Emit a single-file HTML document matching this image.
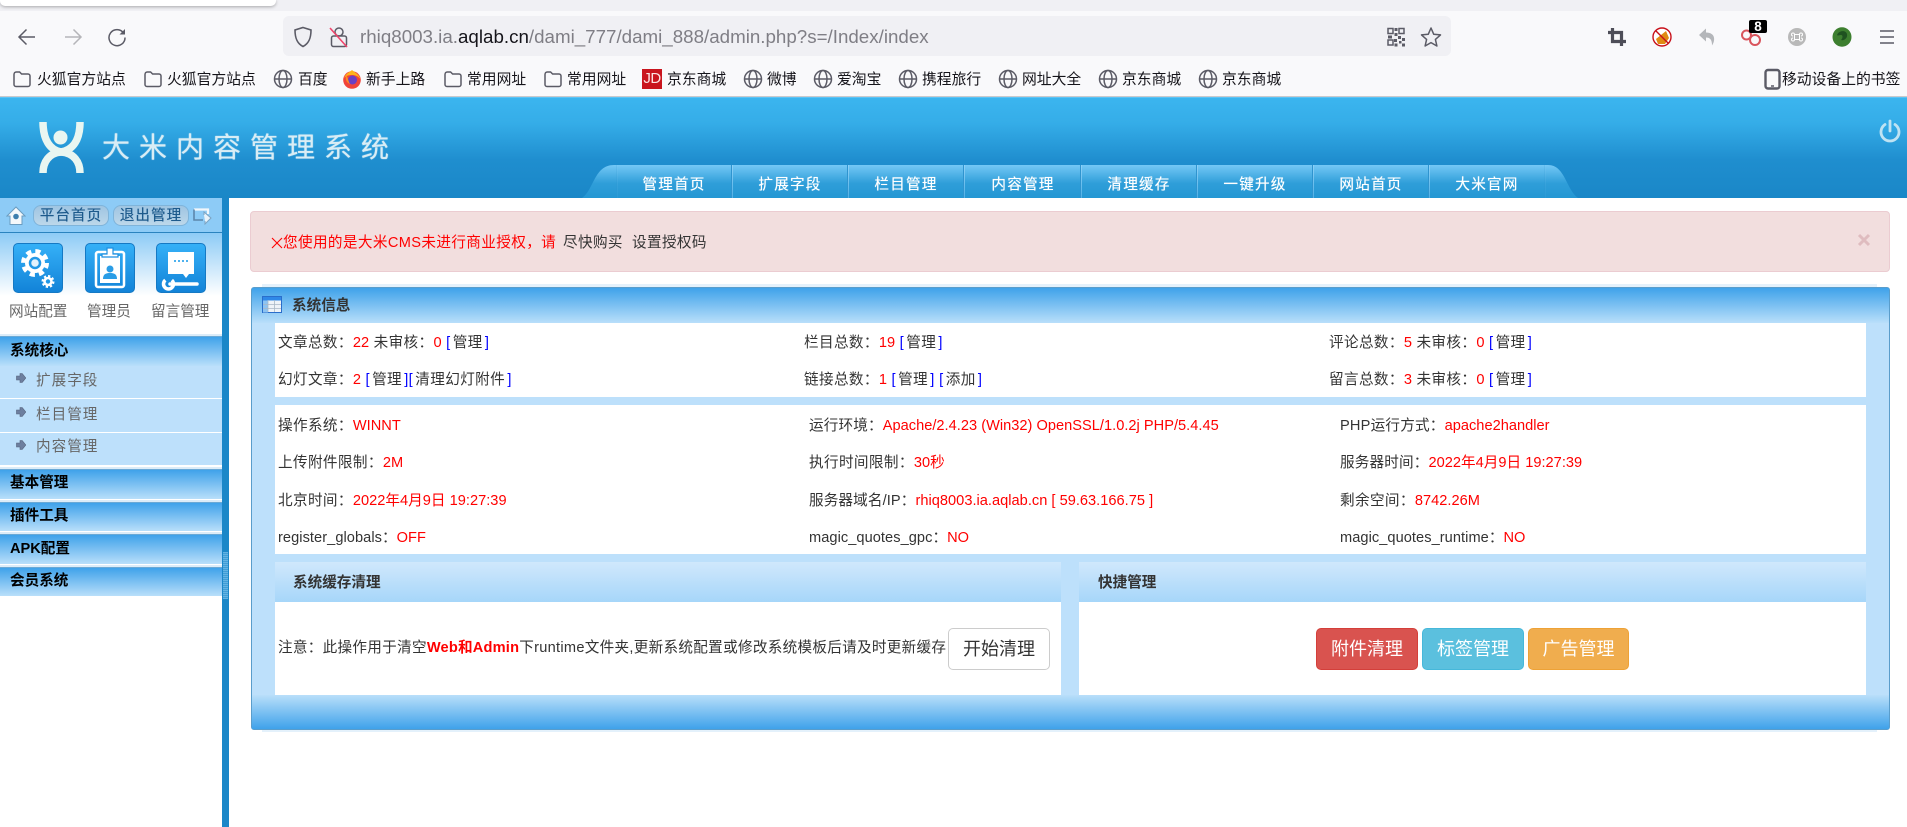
<!DOCTYPE html>
<html lang="zh-CN">
<head>
<meta charset="utf-8">
<title>大米内容管理系统</title>
<style>
html,body{margin:0;padding:0;background:#fff;}
body{width:1907px;height:827px;position:relative;overflow:hidden;font-family:"Liberation Sans","Noto Sans CJK SC",sans-serif;font-size:14.6px;color:#333;}
div,svg,span.a{box-sizing:border-box;}
.b{position:absolute;}
.t{position:absolute;height:20px;line-height:20px;white-space:nowrap;letter-spacing:.38px;}
.bm{font-size:14.8px;color:#15141a;letter-spacing:0;}
.r{color:#f00;letter-spacing:.02px;}
.l{color:#00f;}
.l i{font-style:normal;color:#333;padding:0 2.200px;letter-spacing:.38px;}
.la{letter-spacing:.06px;}
.sh{position:absolute;left:0;width:222px;background:linear-gradient(#3fa2ea,#b9dffa);border-top:1px solid #6aa9d6;box-shadow:0 -2px 0 #dcecf8;}
.st{position:absolute;left:10px;height:20px;line-height:20px;font-weight:bold;color:#000;white-space:nowrap;}
.si{position:absolute;left:36px;height:20px;line-height:20px;color:#666;letter-spacing:1px;white-space:nowrap;}
.tab{position:absolute;top:165px;height:33px;line-height:41px;width:116px;text-align:center;color:#fff;letter-spacing:1.200px;font-size:14.6px;text-shadow:0 0 .6px #fff;overflow:hidden;}
.sep{position:absolute;top:165px;width:2px;height:33px;background:linear-gradient(#8ed2f8,#51b0e5);border-left:1px solid #2f94cf;}
.btn{position:absolute;top:628px;height:42px;line-height:41px;text-align:center;font-size:18px;color:#fff;border-radius:5px;}
.pill{position:absolute;top:205px;height:21px;line-height:21px;text-align:center;color:#1d5a8c;letter-spacing:1px;border-radius:8px;background:linear-gradient(#9fc5e2,#bcd7ea);border:1px solid #7fb4da;font-size:14.6px;text-shadow:0 0 .4px #1d5a8c;overflow:hidden;}
.ico{position:absolute;top:243px;width:50px;height:50px;border-radius:5px;background:linear-gradient(#35b0f7,#1283d8);border:1px solid #1579c4;}
.lab{position:absolute;top:302px;height:20px;line-height:20px;color:#666;font-size:14.6px;white-space:nowrap;}
</style>
</head>
<body>
<svg width="0" height="0" style="position:absolute">
<defs>
<symbol id="folder" viewBox="0 0 20 20"><path d="M2 5.500C2 4 3 3 4.300 3H7.600L9.600 5H16C17.300 5 18 6 18 7V15.500C18 16.600 17.200 17.500 16 17.500H4C2.800 17.500 2 16.600 2 15.500Z" fill="none" stroke="#5b5b66" stroke-width="1.500"/></symbol>
<symbol id="globe" viewBox="0 0 20 20"><g fill="none" stroke="#5b5b66" stroke-width="1.500"><circle cx="10" cy="10" r="8.500"/><ellipse cx="10" cy="10" rx="4" ry="8.500"/><path d="M1.500 10H18.500"/></g></symbol>
<symbol id="arr" viewBox="0 0 10 10"><path d="M4 0.500H6.200L9.800 5 6.200 9.500H4V7H0.500V3H4Z" fill="#6d7f9f" stroke="#55617a" stroke-width=".6"/></symbol>
<linearGradient id="tabg" x1="0" y1="0" x2="0" y2="1"><stop offset="0" stop-color="#74c8f6"/><stop offset=".55" stop-color="#2f9ed9"/><stop offset="1" stop-color="#2497d3"/></linearGradient>
</defs>
</svg>

<!-- browser chrome -->
<div class="b" style="left:0;top:0;width:1907px;height:11px;background:#f0f0f4;"></div>
<div class="b" style="left:0;top:0;width:276px;height:6px;background:#fff;border-radius:0 0 5px 5px;box-shadow:0 1px 3px rgba(0,0,0,.3);"></div>
<div class="b" style="left:0;top:11px;width:1907px;height:86px;background:#f9f9fb;border-bottom:1px solid #c9c9cc;"></div>
<div class="b" style="left:283px;top:16px;width:1168px;height:40px;background:#f0f0f4;border-radius:6px;"></div>

<svg class="b" style="left:17px;top:27px" width="20" height="20" viewBox="0 0 20 20"><path d="M18 10H2.500M9.500 2.500L2 10l7.500 7.500" fill="none" stroke="#5b5b66" stroke-width="1.500"/></svg>
<svg class="b" style="left:63px;top:27px" width="20" height="20" viewBox="0 0 20 20"><path d="M2 10H17.500M10.500 2.500L18 10l-7.500 7.500" fill="none" stroke="#b5b5b9" stroke-width="1.500"/></svg>
<svg class="b" style="left:107px;top:27px" width="20" height="20" viewBox="0 0 20 20"><path d="M16.500 6A8 8 0 1 0 18 10.500" fill="none" stroke="#5b5b66" stroke-width="1.500"/><path d="M18 2V7.500H12.500Z" fill="#5b5b66"/></svg>
<svg class="b" style="left:293px;top:26px" width="20" height="22" viewBox="0 0 20 22"><path d="M10 1.500L18 4C18 12 16 17.500 10 20.500 4 17.500 2 12 2 4Z" fill="none" stroke="#5b5b66" stroke-width="1.600"/></svg>
<svg class="b" style="left:329px;top:26px" width="20" height="22" viewBox="0 0 20 22"><circle cx="10" cy="6" r="4" fill="none" stroke="#5b5b66" stroke-width="1.500"/><rect x="2.500" y="10" width="15" height="10.500" rx="2" fill="#f0f0f4" stroke="#5b5b66" stroke-width="1.500"/><path d="M1 2L18 21" stroke="#f0446b" stroke-width="1.600"/></svg>
<div class="t" style="left:360px;top:27px;font-size:18.750px;color:#7f7e85;letter-spacing:0;">rhiq8003.ia.<span style="color:#15141a">aqlab.cn</span>/dami_777/dami_888/admin.php?s=/Index/index</div>

<svg class="b" style="left:1387px;top:27px" width="18" height="20" viewBox="0 0 18 20"><g fill="none" stroke="#5b5b66" stroke-width="1.500"><rect x="1" y="1.500" width="5" height="5"/><rect x="12" y="1.500" width="5" height="5"/><rect x="1" y="13" width="5" height="5"/></g><g fill="#5b5b66"><rect x="7.500" y="1" width="3" height="3"/><rect x="7.500" y="6" width="3" height="3"/><rect x="1" y="8.500" width="4" height="3"/><rect x="11" y="9" width="3" height="3"/><rect x="7" y="12" width="3" height="3"/><rect x="12" y="14" width="2.500" height="2.500"/><rect x="15" y="11" width="3" height="3"/><rect x="7.500" y="16.500" width="3" height="3"/><rect x="15" y="16.500" width="3" height="3"/></g></svg>
<svg class="b" style="left:1420px;top:26px" width="22" height="22" viewBox="0 0 22 22"><path d="M11 2L13.700 8.200 20.500 8.900 15.400 13.400 16.900 20 11 16.600 5.100 20 6.600 13.400 1.500 8.900 8.300 8.200Z" fill="none" stroke="#5b5b66" stroke-width="1.500" stroke-linejoin="round"/></svg>

<svg class="b" style="left:1607px;top:27px" width="20" height="20" viewBox="0 0 20 20"><path d="M5.500 1V14.500H19M1 5.500H14.500V19" fill="none" stroke="#4e4e58" stroke-width="3.200"/></svg>
<svg class="b" style="left:1652px;top:26px" width="20" height="22" viewBox="0 0 20 22"><circle cx="10" cy="11" r="9" fill="#fff" stroke="#c8101a" stroke-width="1.400"/><path d="M4 13L14 5l3 7-4 6H6Z" fill="#e08a14"/><path d="M3.500 4.500L16.500 17.500" stroke="#c8101a" stroke-width="1.400"/></svg>
<svg class="b" style="left:1698px;top:27px" width="18" height="20" viewBox="0 0 18 20"><path d="M8 1.500L1 8l7 6.500V10.500C12 10.500 14 12.500 14 18.500 17.500 13.500 17.500 5.500 8 5.500Z" fill="#b4b6ba"/></svg>
<svg class="b" style="left:1741px;top:19px" width="28" height="30" viewBox="0 0 28 30"><circle cx="5.500" cy="16" r="4.500" fill="none" stroke="#d9545c" stroke-width="2"/><circle cx="14" cy="21" r="5" fill="none" stroke="#d9545c" stroke-width="2"/><rect x="8" y="1" width="18" height="13" rx="2" fill="#000"/></svg>
<div class="t" style="left:1749px;top:19.500px;width:18px;height:14px;line-height:14px;text-align:center;color:#fff;font-weight:bold;font-size:13.500px;letter-spacing:0;">8</div>
<svg class="b" style="left:1788px;top:28px" width="18" height="18" viewBox="0 0 18 18"><circle cx="9" cy="9" r="9" fill="#b9b9b9"/><path d="M6.500 6.500H11.500V11.500H6.500ZM6.500 6.500A1.500 1.500 0 1 0 5 8M11.500 6.500A1.500 1.500 0 1 1 13 8M6.500 11.500A1.500 1.500 0 1 1 5 10M11.500 11.500A1.500 1.500 0 1 0 13 10" fill="none" stroke="#fff" stroke-width="1"/></svg>
<svg class="b" style="left:1832px;top:27px" width="20" height="20" viewBox="0 0 20 20"><ellipse cx="10" cy="10" rx="9.500" ry="9.800" fill="#3d7f2f"/><path d="M5 8C7 3 14 3 15 7 16 11 12 14 9 13 11 11 11 8 9 8 7 8 6 9 5 8Z" fill="#1f5220"/></svg>
<svg class="b" style="left:1878px;top:29px" width="18" height="16" viewBox="0 0 18 16"><path d="M2 2H16M2 8H16M2 14H16" stroke="#5b5b66" stroke-width="1.500"/></svg>

<!-- bookmarks -->
<svg class="b" style="left:12px;top:69px" width="20" height="20"><use href="#folder"/></svg><div class="t bm" style="left:37px;top:69.500px;">火狐官方站点</div>
<svg class="b" style="left:143px;top:69px" width="20" height="20"><use href="#folder"/></svg><div class="t bm" style="left:167px;top:69.500px;">火狐官方站点</div>
<svg class="b" style="left:273px;top:69px" width="20" height="20"><use href="#globe"/></svg><div class="t bm" style="left:298px;top:69.500px;">百度</div>
<svg class="b" style="left:342px;top:69px" width="20" height="20" viewBox="0 0 20 20"><circle cx="10" cy="11" r="8.800" fill="#f0433a"/><path d="M2 9C4 4 8 3 10 1 12 3 17 5 18.500 10 16 7 13 6 10 6 6 6 4 7 2 9Z" fill="#ffb31a"/><circle cx="10.500" cy="11" r="4.500" fill="#6a3fc4"/><path d="M4 6C6 8 6 12 8 15 5 14 3 11 4 6Z" fill="#ff8a1f"/></svg><div class="t bm" style="left:366px;top:69.500px;">新手上路</div>
<svg class="b" style="left:443px;top:69px" width="20" height="20"><use href="#folder"/></svg><div class="t bm" style="left:467px;top:69.500px;">常用网址</div>
<svg class="b" style="left:543px;top:69px" width="20" height="20"><use href="#folder"/></svg><div class="t bm" style="left:567px;top:69.500px;">常用网址</div>
<div class="b" style="left:642px;top:69px;width:20px;height:20px;background:#c9151e;"></div><div class="t" style="left:642px;top:69px;width:20px;text-align:center;color:#fbe3e4;font-size:15px;letter-spacing:-.5px;">JD</div><div class="t bm" style="left:667px;top:69.500px;">京东商城</div>
<svg class="b" style="left:743px;top:69px" width="20" height="20"><use href="#globe"/></svg><div class="t bm" style="left:767px;top:69.500px;">微博</div>
<svg class="b" style="left:813px;top:69px" width="20" height="20"><use href="#globe"/></svg><div class="t bm" style="left:837px;top:69.500px;">爱淘宝</div>
<svg class="b" style="left:898px;top:69px" width="20" height="20"><use href="#globe"/></svg><div class="t bm" style="left:922px;top:69.500px;">携程旅行</div>
<svg class="b" style="left:998px;top:69px" width="20" height="20"><use href="#globe"/></svg><div class="t bm" style="left:1022px;top:69.500px;">网址大全</div>
<svg class="b" style="left:1098px;top:69px" width="20" height="20"><use href="#globe"/></svg><div class="t bm" style="left:1122px;top:69.500px;">京东商城</div>
<svg class="b" style="left:1198px;top:69px" width="20" height="20"><use href="#globe"/></svg><div class="t bm" style="left:1222px;top:69.500px;">京东商城</div>
<svg class="b" style="left:1764px;top:68px" width="17" height="22" viewBox="0 0 17 22"><rect x="1.500" y="2" width="14" height="18.500" rx="2.500" fill="none" stroke="#5b5b66" stroke-width="2.400"/><path d="M7 18H10" stroke="#5b5b66" stroke-width="1.500"/></svg>
<div class="t bm" style="left:1782px;top:69.500px;">移动设备上的书签</div>

<!-- header -->
<div class="b" style="left:0;top:97px;width:1907px;height:101px;background:linear-gradient(#3bb5ef 0,#35ade8 25%,#1f8ecf 62%,#1a87c7 100%);border-top:1px solid #5bc3f5;"></div>
<svg class="b" style="left:36px;top:120px" width="52" height="56" viewBox="0 0 52 56"><g fill="none" stroke="#e9f6f1" stroke-width="7.500" stroke-linecap="butt"><path d="M7 2C7 20 14 30 25 32 37 30 44 20 44 2"/><path d="M7 53C7 42 13 33 25 32 38 33 44 42 44 53"/></g><circle cx="24.500" cy="17.500" r="7" fill="#e9f6f1"/></svg>
<div class="t" style="left:102px;top:131px;height:34px;line-height:34px;font-size:28px;letter-spacing:9px;color:#d9edf5;text-shadow:0 0 1px #d9edf5;">大米内容管理系统</div>
<svg class="b" style="left:1879px;top:119px" width="22" height="24" viewBox="0 0 22 24"><path d="M6 5.500A9 9 0 1 0 16 5.500" fill="none" stroke="#bfe3f3" stroke-width="2.800" stroke-linecap="round"/><path d="M11 2V12" stroke="#bfe3f3" stroke-width="2.800" stroke-linecap="round"/></svg>

<svg class="b" style="left:582px;top:165px" width="998" height="33" viewBox="0 0 998 33"><path d="M0 33C12 25 12 0 32 0H966C983 0 984 24 996 33Z" fill="url(#tabg)"/></svg>
<div class="sep" style="left:731px"></div><div class="sep" style="left:847px"></div><div class="sep" style="left:963px"></div><div class="sep" style="left:1080px"></div><div class="sep" style="left:1196px"></div><div class="sep" style="left:1312px"></div><div class="sep" style="left:1428px"></div><div class="sep" style="left:616px;opacity:.15"></div><div class="sep" style="left:1544px;opacity:.15"></div>
<div class="tab" style="left:616px">管理首页</div>
<div class="tab" style="left:732px">扩展字段</div>
<div class="tab" style="left:848px">栏目管理</div>
<div class="tab" style="left:965px">内容管理</div>
<div class="tab" style="left:1081px">清理缓存</div>
<div class="tab" style="left:1197px">一键升级</div>
<div class="tab" style="left:1313px">网站首页</div>
<div class="tab" style="left:1429px">大米官网</div>

<!-- sidebar -->
<div class="b" style="left:222px;top:198px;width:7px;height:629px;background:#1b87c8;"></div>
<div class="b" style="left:223px;top:552px;width:5px;height:47px;background:repeating-linear-gradient(#63b3e3 0 1px,#3f9dd6 1px 2px);"></div>
<div class="b" style="left:0;top:198px;width:222px;height:35px;background:#8dcbf6;border-bottom:1px solid #2a83bf;"></div>
<svg class="b" style="left:6px;top:206px" width="20" height="20" viewBox="0 0 20 20"><path d="M10 1L19 10H16V18.500H4V10H1Z" fill="#f4f8fb" stroke="#6a9cc0"/><circle cx="10" cy="10.500" r="2.800" fill="#3d7fae"/></svg>
<div class="pill" style="left:33px;width:76px;">平台首页</div>
<div class="pill" style="left:113px;width:76px;">退出管理</div>
<svg class="b" style="left:193px;top:207px" width="20" height="18" viewBox="0 0 20 18"><path d="M1 2.500H15V7" fill="none" stroke="#f2f7fb" stroke-width="2.200"/><path d="M1 2.500V13H10" fill="none" stroke="#5d87ac" stroke-width="1.600"/><path d="M11 8V5l7 6-6 6v-3" fill="#e9f3fa" stroke="#7ba3c2"/></svg>
<div class="b" style="left:0;top:233px;width:222px;height:63px;background:linear-gradient(#8dcbf6,#fff);"></div>

<div class="ico" style="left:13px;"></div>
<svg class="b" style="left:13px;top:243px" width="50" height="50" viewBox="0 0 50 50"><circle cx="22" cy="20" r="11.500" fill="none" stroke="#fff" stroke-width="5" stroke-dasharray="5 4.030"/><circle cx="22" cy="20" r="10" fill="#fff"/><circle cx="22" cy="20" r="5" fill="#e3f2fc" stroke="#2298e6" stroke-width="2.500"/><circle cx="35" cy="38.500" r="5.500" fill="none" stroke="#fff" stroke-width="2" stroke-dasharray="2.300 2"/><circle cx="35" cy="38.500" r="4.800" fill="#fff"/><circle cx="35" cy="38.500" r="2.200" fill="#2298e6"/></svg>
<div class="ico" style="left:85px;"></div>
<svg class="b" style="left:85px;top:243px" width="50" height="50" viewBox="0 0 50 50"><rect x="11" y="9" width="28" height="35" rx="2" fill="none" stroke="#fff" stroke-width="2.500"/><rect x="15" y="13" width="20" height="27" fill="#fff"/><path d="M17 14H33V11H28V5H22V11H17Z" fill="#fff" stroke="#1e8fe0" stroke-width="1.200"/><circle cx="25" cy="26" r="3.500" fill="#2a9de6"/><path d="M18 36C18 31 21 30 25 30S32 31 32 36Z" fill="#2a9de6"/></svg>
<div class="ico" style="left:156px;"></div>
<svg class="b" style="left:156px;top:243px" width="50" height="50" viewBox="0 0 50 50"><path d="M12 9H38V31H33L30 35 27 31H12Z" fill="#fff"/><path d="M18 18H32" stroke="#4eb2ee" stroke-width="2" stroke-dasharray="2 2"/><path d="M14 41H41" stroke="#fff" stroke-width="3.500" stroke-linecap="round"/><circle cx="12.500" cy="41" r="5" fill="none" stroke="#fff" stroke-width="3.500" stroke-dasharray="20 7"/></svg>
<div class="lab" style="left:9px;">网站配置</div>
<div class="lab" style="left:87px;">管理员</div>
<div class="lab" style="left:151px;">留言管理</div>

<div class="sh" style="top:336px;height:30px;"></div>
<div class="b" style="left:0;top:366px;width:222px;height:99px;background:#bde0fb;"></div>
<div class="b" style="left:0;top:398px;width:222px;height:1px;background:#fff;"></div>
<div class="b" style="left:0;top:432px;width:222px;height:1px;background:#fff;"></div>
<div class="sh" style="top:469px;height:30px;"></div>
<div class="sh" style="top:502px;height:29px;"></div>
<div class="sh" style="top:534px;height:30px;"></div>
<div class="sh" style="top:567px;height:29px;"></div>
<div class="st" style="top:341px;">系统核心</div>
<div class="st" style="top:473px;">基本管理</div>
<div class="st" style="top:506px;">插件工具</div>
<div class="st" style="top:539px;">APK配置</div>
<div class="st" style="top:571px;">会员系统</div>
<svg class="b" style="left:16px;top:373px" width="10" height="10"><use href="#arr"/></svg><div class="si" style="top:371px;">扩展字段</div>
<svg class="b" style="left:16px;top:407px" width="10" height="10"><use href="#arr"/></svg><div class="si" style="top:405px;">栏目管理</div>
<svg class="b" style="left:16px;top:440px" width="10" height="10"><use href="#arr"/></svg><div class="si" style="top:437px;">内容管理</div>

<!-- alert -->
<div class="b" style="left:250px;top:211px;width:1640px;height:61px;background:#f2dede;border:1px solid #ebccd1;border-radius:4px;"></div>
<svg class="b" style="left:271px;top:237px" width="12" height="12" viewBox="0 0 12 12"><path d="M1 1L11 11M11 1L1 11" stroke="#f00" stroke-width="1.100"/></svg>
<div class="t r" style="left:283px;top:233px;letter-spacing:.38px;">您使用的是大米CMS未进行商业授权，请</div>
<div class="t" style="left:563px;top:233px;">尽快购买</div>
<div class="t" style="left:632px;top:233px;">设置授权码</div>
<svg class="b" style="left:1857px;top:233px" width="14" height="14" viewBox="0 0 14 14"><path d="M2 2L12 12M12 2L2 12" stroke="#dfbcbf" stroke-width="3"/></svg>

<!-- panel -->
<div class="b" style="left:262px;top:284px;width:1615px;height:3px;background:#e4f1fb;"></div>
<div class="b" style="left:262px;top:729px;width:1615px;height:3px;background:#e4f1fb;"></div>
<div class="b" style="left:251px;top:287px;width:1639px;height:443px;background:#bde0fb;border:1px solid #5a9dcb;border-radius:3px;"></div>
<div class="b" style="left:252px;top:288px;width:1637px;height:35px;background:linear-gradient(#3fa2ea,#b9dffa);"></div>
<div class="b" style="left:252px;top:695px;width:1637px;height:34px;background:linear-gradient(#b9dffa,#3fa2ea);"></div>
<svg class="b" style="left:262px;top:296px" width="20" height="17" viewBox="0 0 20 17"><rect x=".5" y=".5" width="19" height="16" fill="#eef3f8" stroke="#2a6ecb"/><rect x="1" y="1" width="18" height="3.500" fill="#2f88e8"/><rect x="1" y="4.500" width="5" height="12" fill="#8cc3f2"/><path d="M1 8.500H19M1 12.500H19M6 4V16M12.500 4V16" stroke="#a9b8c6" stroke-width=".8"/></svg>
<div class="t" style="left:292px;top:296px;font-weight:bold;color:#333;letter-spacing:0;">系统信息</div>

<div class="b" style="left:275px;top:323px;width:1591px;height:74px;background:#fff;"></div>
<div class="b" style="left:275px;top:405px;width:1591px;height:149px;background:#fff;"></div>
<div class="b" style="left:275px;top:562px;width:786px;height:40px;background:linear-gradient(#d0e8fc,#a6d6f9);"></div>
<div class="b" style="left:275px;top:602px;width:786px;height:93px;background:#fff;"></div>
<div class="b" style="left:1079px;top:562px;width:787px;height:40px;background:linear-gradient(#d0e8fc,#a6d6f9);"></div>
<div class="b" style="left:1079px;top:602px;width:787px;height:93px;background:#fff;"></div>

<div class="t" style="left:278px;top:333px;">文章总数：<span class="r">22</span> 未审核：<span class="r">0</span> <span class="l">[<i>管理</i>]</span></div>
<div class="t" style="left:804px;top:333px;">栏目总数：<span class="r">19</span> <span class="l">[<i>管理</i>]</span></div>
<div class="t" style="left:1329px;top:333px;">评论总数：<span class="r">5</span> 未审核：<span class="r">0</span> <span class="l">[<i>管理</i>]</span></div>
<div class="t" style="left:278px;top:370px;">幻灯文章：<span class="r">2</span> <span class="l">[<i>管理</i>]</span><span class="l">[<i>清理幻灯附件</i>]</span></div>
<div class="t" style="left:804px;top:370px;">链接总数：<span class="r">1</span> <span class="l">[<i>管理</i>]</span> <span class="l">[<i>添加</i>]</span></div>
<div class="t" style="left:1329px;top:370px;">留言总数：<span class="r">3</span> 未审核：<span class="r">0</span> <span class="l">[<i>管理</i>]</span></div>

<div class="t" style="left:278px;top:416px;">操作系统：<span class="r">WINNT</span></div>
<div class="t" style="left:809px;top:416px;letter-spacing:.15px;">运行环境：<span class="r">Apache/2.4.23 (Win32) OpenSSL/1.0.2j PHP/5.4.45</span></div>
<div class="t" style="left:1340px;top:416px;letter-spacing:.2px;">PHP运行方式：<span class="r">apache2handler</span></div>
<div class="t" style="left:278px;top:453px;">上传附件限制：<span class="r">2M</span></div>
<div class="t" style="left:809px;top:453px;">执行时间限制：<span class="r">30秒</span></div>
<div class="t" style="left:1340px;top:453px;letter-spacing:.15px;">服务器时间：<span class="r">2022年4月9日 19:27:39</span></div>
<div class="t" style="left:278px;top:491px;">北京时间：<span class="r">2022年4月9日 19:27:39</span></div>
<div class="t" style="left:809px;top:491px;letter-spacing:.12px;">服务器域名/IP：<span class="r">rhiq8003.ia.aqlab.cn [ 59.63.166.75 ]</span></div>
<div class="t" style="left:1340px;top:491px;">剩余空间：<span class="r">8742.26M</span></div>
<div class="t la" style="left:278px;top:528px;">register_globals：<span class="r">OFF</span></div>
<div class="t la" style="left:809px;top:528px;">magic_quotes_gpc：<span class="r">NO</span></div>
<div class="t la" style="left:1340px;top:528px;">magic_quotes_runtime：<span class="r">NO</span></div>

<div class="t" style="left:293px;top:573px;font-weight:bold;letter-spacing:0;">系统缓存清理</div>
<div class="t" style="left:1098px;top:573px;font-weight:bold;letter-spacing:0;">快捷管理</div>
<div class="t" style="left:278px;top:638px;letter-spacing:.29px;">注意：此操作用于清空<b class="r" style="letter-spacing:.2px">Web和Admin</b>下runtime文件夹,更新系统配置或修改系统模板后请及时更新缓存</div>
<div class="btn" style="left:948px;width:102px;background:#fff;border:1px solid #ccc;color:#333;">开始清理</div>
<div class="btn" style="left:1316px;width:102px;background:#d9534f;border:1px solid #d43f3a;">附件清理</div>
<div class="btn" style="left:1422px;width:102px;background:#5bc0de;border:1px solid #46b8da;">标签管理</div>
<div class="btn" style="left:1528px;width:101px;background:#f0ad4e;border:1px solid #eea236;">广告管理</div>
</body>
</html>
